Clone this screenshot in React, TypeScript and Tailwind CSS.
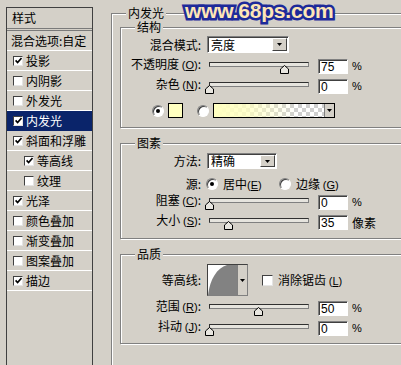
import React from "react";

const items = [
  { t: "投影", c: true },
  { t: "内阴影", c: false },
  { t: "外发光", c: false },
  { t: "内发光", c: true, sel: true },
  { t: "斜面和浮雕", c: true },
  { t: "等高线", c: true, ind: true },
  { t: "纹理", c: false, ind: true },
  { t: "光泽", c: true },
  { t: "颜色叠加", c: false },
  { t: "渐变叠加", c: false },
  { t: "图案叠加", c: false },
  { t: "描边", c: true },
];

function CheckMark() {
  return (
    <svg width="7" height="7" viewBox="0 0 7 7">
      <path d="M0.6 3.4 L2.6 5.6 L6.5 1" fill="none" stroke="#000" strokeWidth="1.6" />
    </svg>
  );
}

function CheckBox({ checked }: { checked: boolean }) {
  return (
    <span className="w-[10px] h-[10px] shrink-0 bg-white border border-t-[#404040] border-l-[#404040] border-r-[#e4e4e4] border-b-[#e4e4e4] flex items-center justify-center">
      {checked && <CheckMark />}
    </span>
  );
}

function Radio({ checked }: { checked: boolean }) {
  return (
    <span className="w-[12px] h-[12px] shrink-0 rounded-full bg-white border border-t-[#808080] border-l-[#808080] border-r-white border-b-white shadow-[inset_1px_1px_0_#404040] flex items-center justify-center">
      {checked && <span className="w-[4px] h-[4px] rounded-full bg-black" />}
    </span>
  );
}

function Arrow() {
  return (
    <svg width="5" height="3" viewBox="0 0 5 3">
      <path d="M0 0 L5 0 L2.5 3 Z" fill="#000" />
    </svg>
  );
}

function DropButton() {
  return (
    <span className="w-[15px] h-full shrink-0 bg-[#d4d0c8] border border-t-white border-l-white border-b-[#404040] border-r-[#404040] flex items-center justify-center">
      <Arrow />
    </span>
  );
}

function Select({ text, w }: { text: string; w: string }) {
  return (
    <div
      className={`${w} h-full shrink-0 bg-white border border-t-[#808080] border-l-[#808080] border-r-white border-b-white shadow-[inset_1px_1px_0_#404040] flex items-center justify-between pl-[3px] pr-[1px] py-[1px]`}
    >
      <span>{text}</span>
      <DropButton />
    </div>
  );
}

function Slider({ pct }: { pct: number }) {
  return (
    <div className="relative w-[100px] h-[15px] shrink-0 ml-[8px]">
      <div className="mt-[3px] h-[5px] border border-t-[#303030] border-l-[#303030] border-r-[#808080] border-b-[#808080] bg-[#e6e4de]" />
      <svg
        className="absolute top-[6px]"
        style={{ left: pct - 4.5 }}
        width="9"
        height="9"
        viewBox="0 0 9 9"
      >
        <path d="M0.5 8.5 L0.5 4 L4.5 0.5 L8.5 4 L8.5 8.5 Z" fill="#e8e6e0" stroke="#000" strokeWidth="1" />
      </svg>
    </div>
  );
}

function NumInput({ v }: { v: string }) {
  return (
    <div className="ml-[9px] w-[30px] h-[15px] shrink-0 bg-white border border-t-[#808080] border-l-[#808080] border-r-white border-b-white shadow-[inset_1px_1px_0_#404040] pl-[2px] flex items-center font-['Liberation_Sans',sans-serif] text-[12px]">
      {v}
    </div>
  );
}

function Label({ children, slider }: { children: React.ReactNode; slider?: boolean }) {
  return (
    <span className={`w-[80px] shrink-0 text-right whitespace-nowrap ${slider ? "mb-[4px]" : ""}`}>
      {children}
    </span>
  );
}

function Key({ k }: { k: string }) {
  return (
    <span className="font-['Liberation_Sans',sans-serif] text-[11px]">
      (<span className="underline">{k}</span>)
    </span>
  );
}

function SliderRow({
  label,
  k,
  pct,
  v,
  unit,
  mt,
}: {
  label: string;
  k: string;
  pct: number;
  v: string;
  unit: string;
  mt: string;
}) {
  return (
    <div className={`flex items-center h-[15px] ${mt}`}>
      <Label slider>
        {label} <Key k={k} />:
      </Label>
      <Slider pct={pct} />
      <NumInput v={v} />
      <span
        className={`ml-[4px] ${unit === "%" ? "font-['Liberation_Sans',sans-serif] text-[11px]" : ""}`}
      >
        {unit}
      </span>
    </div>
  );
}

function GroupBox({
  title,
  h,
  pt,
  children,
}: {
  title: string;
  h: string;
  pt: string;
  children: React.ReactNode;
}) {
  return (
    <div
      className={`relative w-[300px] ${h} ${pt} shrink-0 border border-[#808080] shadow-[inset_1px_1px_0_#fff,1px_1px_0_#fff]`}
    >
      <span className="absolute top-[-7px] left-[14px] px-[2px] bg-[#d4d0c8]">{title}</span>
      {children}
    </div>
  );
}

function LeftPanel() {
  return (
    <div className="ml-[6px] mt-[7px] w-[87px] h-[400px] shrink-0 border border-[#404040] flex flex-col">
      <div className="h-[23px] shrink-0 border-b-[3px] border-double border-[#7a7a7a] flex items-center pl-[5px]">
        样式
      </div>
      <div className="h-[20px] shrink-0 border-b border-white flex items-center pl-[4px] whitespace-nowrap">
        混合选项:自定
      </div>
      {items.map((it) => (
        <div
          key={it.t}
          className={`h-[20px] shrink-0 border-b flex items-center whitespace-nowrap ${
            it.ind ? "pl-[17px]" : "pl-[6px]"
          } ${it.sel ? "bg-[#0a246a] text-white border-[#0a246a]" : "border-white"}`}
        >
          <CheckBox checked={it.c} />
          <span className="ml-[3px]">{it.t}</span>
        </div>
      ))}
    </div>
  );
}

function ContourPreview() {
  return (
    <div className="ml-[6px] w-[41px] h-[32px] shrink-0 border border-t-[#404040] border-l-[#404040] border-r-[#808080] border-b-[#808080] bg-white flex">
      <svg width="29" height="30" viewBox="0 0 29 30" className="shrink-0">
        <path d="M0 30 C2 14 9 3 19 0 L29 0 L29 30 Z" fill="#828282" />
      </svg>
      <span className="w-[10px] h-full bg-[#d4d0c8] border-l border-[#808080] flex items-center justify-center">
        <Arrow />
      </span>
    </div>
  );
}

function RightArea() {
  return (
    <div className="relative ml-[18px] mt-[13px] w-[320px] h-[380px] shrink-0 border-l border-t border-[#808080] shadow-[inset_1px_1px_0_#fff] pl-[8px] pt-[13px] flex flex-col gap-[15px]">
      <span className="absolute top-[-7px] left-[14px] px-[2px] bg-[#d4d0c8]">内发光</span>

      <GroupBox title="结构" h="h-[101px]" pt="pt-[8px]">
        <div className="flex items-center h-[17px]">
          <Label>混合模式:</Label>
          <div className="ml-[6px] h-full">
            <Select text="亮度" w="w-[82px]" />
          </div>
        </div>
        <SliderRow label="不透明度" k="O" pct={75} v="75" unit="%" mt="mt-[6px]" />
        <SliderRow label="杂色" k="N" pct={0} v="0" unit="%" mt="mt-[5px]" />
        <div className="flex items-center h-[15px] mt-[9px] pl-[31px]">
          <Radio checked />
          <span className="ml-[4px] w-[15px] h-[15px] shrink-0 border border-black bg-[#ffffc0]" />
          <span className="ml-[14px]">
            <Radio checked={false} />
          </span>
          <div className="ml-[4px] w-[122px] h-[15px] shrink-0 border border-black flex">
            <div className="flex-1 bg-[repeating-conic-gradient(#cfcfcf_0_25%,#ffffff_0_50%)] bg-[length:8px_8px]">
              <div className="w-full h-full bg-[linear-gradient(to_right,#ffffc0_0%,#ffffc0cc_30%,#ffffc000_75%)]" />
            </div>
            <span className="w-[10px] h-full shrink-0 bg-[#d4d0c8] border-l border-[#808080] flex items-center justify-center">
              <Arrow />
            </span>
          </div>
        </div>
      </GroupBox>

      <GroupBox title="图素" h="h-[96px]" pt="pt-[9px]">
        <div className="flex items-center h-[16px]">
          <Label>方法:</Label>
          <div className="ml-[6px] h-full">
            <Select text="精确" w="w-[70px]" />
          </div>
        </div>
        <div className="flex items-center h-[14px] mt-[8px]">
          <Label>源:</Label>
          <div className="ml-[5px] w-[73px] shrink-0 flex items-center">
            <Radio checked />
            <span className="ml-[5px] whitespace-nowrap">
              居中<Key k="E" />
            </span>
          </div>
          <Radio checked={false} />
          <span className="ml-[5px] whitespace-nowrap">
            边缘 <Key k="G" />
          </span>
        </div>
        <SliderRow label="阻塞" k="C" pct={0} v="0" unit="%" mt="mt-[4px]" />
        <SliderRow label="大小" k="S" pct={19} v="35" unit="像素" mt="mt-[5px]" />
      </GroupBox>

      <GroupBox title="品质" h="h-[90px]" pt="pt-[9px]">
        <div className="flex items-center h-[32px]">
          <Label>等高线:</Label>
          <ContourPreview />
          <span className="ml-[14px]">
            <span className="w-[11px] h-[11px] block bg-white border border-t-[#404040] border-l-[#404040] border-r-[#e4e4e4] border-b-[#e4e4e4]" />
          </span>
          <span className="ml-[5px] whitespace-nowrap">
            消除锯齿 <Key k="L" />
          </span>
        </div>
        <SliderRow label="范围" k="R" pct={49} v="50" unit="%" mt="mt-[5px]" />
        <SliderRow label="抖动" k="J" pct={0} v="0" unit="%" mt="mt-[5px]" />
      </GroupBox>
    </div>
  );
}

export default function App() {
  return (
    <div className="relative w-[401px] h-[365px] overflow-hidden bg-[#d4d0c8] flex items-start text-[12px] leading-none text-black font-['Noto_Sans_CJK_SC',sans-serif]">
      <LeftPanel />
      <RightArea />
      <span className="absolute left-[185px] top-[0px] whitespace-nowrap font-['Liberation_Sans',sans-serif] font-bold text-[21px] leading-[22px] tracking-[-0.2px] text-[#fde6b6] [-webkit-text-stroke:5px_#1d2a9a] [paint-order:stroke_fill]">
        www.68ps.com
      </span>
    </div>
  );
}
